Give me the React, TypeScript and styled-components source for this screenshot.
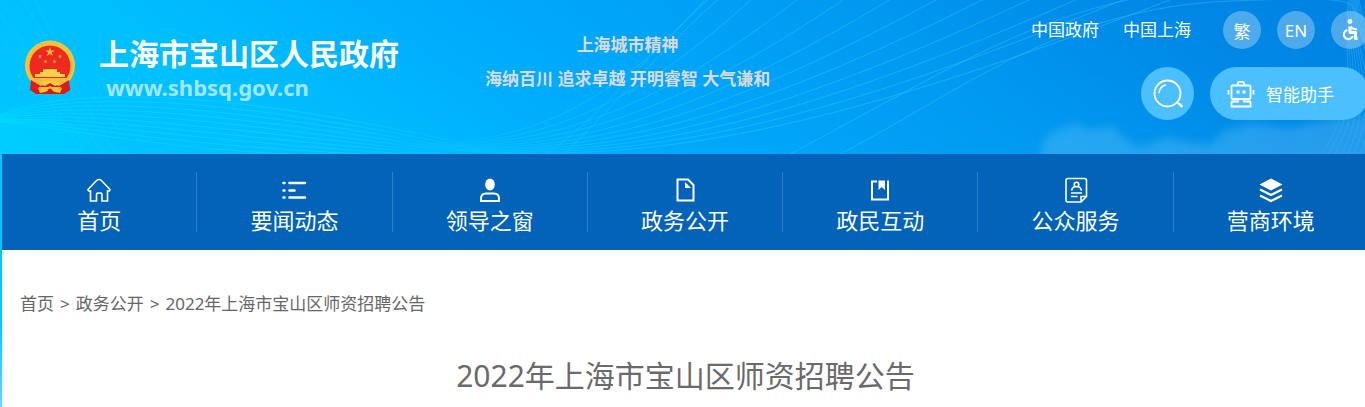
import React from "react";
import styled, { createGlobalStyle } from "styled-components";

const GlobalStyle = createGlobalStyle`
  *, *::before, *::after { box-sizing: border-box; }
  html, body { margin: 0; padding: 0; }
  body {
    font-family: "Noto Sans", "Noto Sans CJK SC", sans-serif;
    color: #666;
    background: #fff;
    overflow-x: hidden;
  }
  a { color: inherit; text-decoration: none; }
`;

const Page = styled.div`
  min-height: 100vh;
  overflow: hidden;
  background: linear-gradient(to bottom, #00c3ff 0, #00c8ff 320px, #62d6ff 407px);
`;

const Wide = styled.div`
  width: calc(100% + 4px);
`;

const Header = styled.header`
  position: relative;
  display: flex;
  align-items: flex-start;
  height: 154px;
  background: linear-gradient(35deg, #00c6ff 0%, #00bfff 20%, #00aafc 42%, #009af1 66%, #0088e6 86%, #0082e2 100%);
`;

const Backdrop = styled.svg`
  position: absolute;
  inset: 0;
  width: 100%;
  height: 100%;
`;

const Brand = styled.a`
  position: relative;
  display: flex;
  gap: 23px;
  padding: 36px 0 0 24px;
  color: #fff;
`;

const Emblem = styled.svg`
  width: 52px;
  height: 54px;
  margin-top: 4px;
`;

const BrandText = styled.div`
  display: flex;
  flex-direction: column;
`;

const SiteName = styled.span`
  font-size: 30px;
  line-height: 36px;
  font-weight: 700;
  white-space: nowrap;
`;

const SiteUrl = styled.span`
  padding-left: 7px;
  font-size: 22px;
  line-height: 30px;
  font-weight: 700;
  color: rgba(255, 255, 255, 0.65);
`;

const Slogan = styled.p`
  position: relative;
  margin: 28px 0 0 86px;
  font-size: 17px;
  line-height: 34px;
  font-weight: 700;
  text-align: center;
  white-space: nowrap;
  color: #d9dadd;
`;

const Tools = styled.div`
  position: relative;
  display: flex;
  flex-direction: column;
  align-items: flex-end;
  gap: 18px;
  margin-left: auto;
  padding-top: 11px;
`;

const ToolRow = styled.div`
  display: flex;
  align-items: center;
  gap: 16px;
`;

const TopLink = styled.a`
  margin-right: 8px;
  font-size: 17px;
  line-height: 38px;
  color: #fff;
  white-space: nowrap;

  &:last-of-type {
    margin-right: 16px;
  }
`;

const RoundButton = styled.button<{ $size: number; $solid?: boolean }>`
  display: flex;
  align-items: center;
  justify-content: center;
  flex: none;
  width: ${(p) => p.$size}px;
  height: ${(p) => p.$size}px;
  padding: 0;
  border: 0;
  border-radius: 50%;
  background: ${(p) => (p.$solid ? "#4cbfff" : "rgba(255, 255, 255, 0.3)")};
  color: #fff;
  font-family: inherit;
  font-size: 17px;
  cursor: pointer;
`;

const AssistantButton = styled.button`
  display: flex;
  align-items: center;
  gap: 11px;
  height: 53px;
  padding: 0 35px 0 17px;
  border: 0;
  border-radius: 27px;
  background: #4cbfff;
  color: #fff;
  font-family: inherit;
  font-size: 17px;
  white-space: nowrap;
  cursor: pointer;
`;

const Nav = styled.nav`
  display: flex;
  margin-left: 2px;
  padding: 18px 0;
  background: #0263b9;
`;

const NavItem = styled.a`
  flex: 1;
  display: flex;
  flex-direction: column;
  align-items: center;
  height: 60px;
  padding-top: 4px;
  border-right: 1px solid #2f7fc6;
  color: #fff;
  font-size: 22px;
  line-height: 32px;

  &:last-child {
    border-right-color: transparent;
  }
`;

const NavIcon = styled.svg`
  flex: none;
  width: 28px;
  height: 28px;
  fill: none;
  stroke: #fff;
  stroke-width: 2;
`;

const Main = styled.main`
  margin-left: 2px;
  min-height: calc(100vh - 250px);
  padding: 41px 0 10px 18px;
  background: #fff;
`;

const Crumbs = styled.div`
  display: flex;
  gap: 6px;
  font-size: 17px;
  line-height: 26px;
  color: #666;
`;

const Title = styled.h1`
  margin: 37px 18px 0 0;
  font-size: 30px;
  line-height: 44px;
  font-weight: 400;
  text-align: center;
  color: #6a6a6a;
`;

const steps = (n: number) => Array.from({ length: n }, (_, i) => i / (n - 1));

function HeaderBackdrop() {
  return (
    <Backdrop viewBox="0 0 1369 154" preserveAspectRatio="xMaxYMin slice" aria-hidden="true">
      <defs>
        <filter id="mist" x="-20%" y="-50%" width="140%" height="200%">
          <feGaussianBlur stdDeviation="5" />
        </filter>
        <linearGradient id="leftGlow" gradientUnits="userSpaceOnUse" x1="0" y1="0" x2="560" y2="0">
          <stop offset="0" stopColor="#00e0ff" stopOpacity="0.55" />
          <stop offset="0.6" stopColor="#30d4ff" stopOpacity="0.4" />
          <stop offset="1" stopColor="#10d0ff" stopOpacity="0" />
        </linearGradient>
        <linearGradient id="rightGlow" gradientUnits="userSpaceOnUse" x1="400" y1="0" x2="1369" y2="0">
          <stop offset="0" stopColor="#10d0ff" stopOpacity="0" />
          <stop offset="0.12" stopColor="#10d0ff" stopOpacity="0.4" />
          <stop offset="0.3" stopColor="#2cc8ff" stopOpacity="0.5" />
          <stop offset="1" stopColor="#45c0f8" stopOpacity="0.4" />
        </linearGradient>
        <linearGradient id="shore" x1="0" y1="0" x2="1" y2="0">
          <stop offset="0" stopColor="#00dcff" stopOpacity="0.35" />
          <stop offset="1" stopColor="#00dcff" stopOpacity="0.1" />
        </linearGradient>
      </defs>
      <path d="M0 120C60 116 90 124 132 156H0Z" fill="url(#shore)" />
      <g fill="#6cc5f5" opacity="0.34" filter="url(#mist)">
        <path d="M1042 166V140L1058 130L1074 124L1092 130L1112 126L1124 138L1140 148L1166 137L1190 143L1212 144L1222 132L1250 124L1290 128L1330 120L1376 114V166Z" />
      </g>
      <g fill="none" stroke="url(#rightGlow)" strokeWidth="1">
        {steps(11).map((t) => (
          <path
            key={t}
            d={`M400 ${143 + 3 * t}C${520 + 100 * t} ${147 + 20 * t} ${610 + 180 * t} ${112 + 38 * t} ${715 + 485 * t} -12`}
          />
        ))}
        <path d="M540 158C600 120 640 60 712 -4M560 158C620 100 660 50 722 -4" />
        <path d="M840 154C960 92 1060 8 1230 1S1330 8 1369 20" />
        <path d="M790 154C950 70 1050 0 1200 -10" />
      </g>
      <g fill="none" stroke="url(#leftGlow)" strokeWidth="1">
        {steps(10).map((t) => (
          <path
            key={t}
            d={`M-10 ${119 + 2 * t}C${60 + 30 * t} ${85 + 45 * t} ${220 - 40 * t} ${88 + 68 * t} ${460 - 60 * t} ${143 + 14 * t}S640 150 720 170`}
          />
        ))}
      </g>
      <g fill="none" stroke="#2ccfff" strokeWidth="1" opacity="0.35">
        <path d="M20 -4L116 154M-4 8L104 154M-4 30C40 80 60 120 84 154M34 -4C60 60 110 120 140 154" />
      </g>
      <g fill="none" stroke="#2cb6f6" strokeWidth="1" opacity="0.5">
        {steps(7).map((t) => (
          <path
            key={t}
            d={`M${1349 + 10 * t} -4C${1340 + 6 * t} ${60 - 10 * t} ${1365 + 24 * t} 90 ${1318 + 40 * t} 160`}
          />
        ))}
        {steps(5).map((t) => (
          <path key={t} d={`M${1352 + 6 * t} -4C${1360 + 10 * t} 50 ${1380 - 8 * t} 70 ${1366 + 6 * t} 110`} />
        ))}
      </g>
    </Backdrop>
  );
}

const star = (cx: number, cy: number, r: number) =>
  Array.from({ length: 10 }, (_, i) => {
    const rad = i % 2 ? r * 0.4 : r;
    const a = (Math.PI / 5) * i - Math.PI / 2;
    return `${cx + rad * Math.cos(a)},${cy + rad * Math.sin(a)}`;
  }).join(" ");

function NationalEmblem() {
  return (
    <Emblem viewBox="0 0 52 54" role="img" aria-label="国徽">
      <path d="M8 38H44L46 50L40 54H12L8 51Z" fill="#d8191b" />
      <circle cx="26" cy="25.500" r="25" fill="#f6c33a" />
      <circle cx="26" cy="25.500" r="22.500" fill="none" stroke="#efb632" strokeWidth="1" strokeDasharray="2 2" />
      <circle cx="26" cy="26" r="20.500" fill="#ee2a20" />
      <polygon points={star(26, 12, 5)} fill="#f4b53a" />
      {[[16, 16.5], [36, 16.5], [21.5, 21.5], [30.5, 21.5]].map(([x, y]) => (
        <polygon key={`${x}-${y}`} points={star(x, y, 2.3)} fill="#e8a036" />
      ))}
      <path d="M19 29H33V32H36V34H41V37H11V34H16V32H19Z" fill="#f9d04a" />
      <path d="M9 38H43L40 42L32 46L26 42L20 46L12 42Z" fill="#f3bd36" />
      <path d="M7 40L17 46L26 40L35 46L45 40L46 50L40 53L37 47H15L12 53L6 50Z" fill="#dc1c1c" />
      <path d="M18 42L26 40L34 42L37 44L31 46L26 43L21 46L15 44Z" fill="#f9cb45" />
      <path d="M14 48L20 49L26 46L32 49L38 48L36 53L31 52L26 50L21 52L16 53Z" fill="#f6c33a" />
      <circle cx="26" cy="51" r="2.500" fill="#d8191b" />
    </Emblem>
  );
}

const icons: Record<string, React.ReactNode> = {
  home: (
    <path
      d="M3 13.500L11.500 4.500Q14 2.500 16.500 4.500L25 13.500Q25 15.500 22.500 15V25H17V18.500Q17 17 15.500 17H13Q11.500 17 11.500 18.500V25H5.500V15Q3 15.500 3 13.500Z"
      strokeWidth="1.600"
    />
  ),
  list: (
    <g strokeWidth="2.500" strokeLinecap="round">
      <path d="M3.500 7H4.500M3.500 14.500H4.500M3.500 21.500H4.500M9.500 7H25M9.500 14.500H14.500M9.500 21.500H25" />
    </g>
  ),
  person: (
    <>
      <ellipse cx="14" cy="8.500" rx="4.800" ry="6" fill="#fff" stroke="none" />
      <path d="M5 25V22.500Q5 17.500 10 17.500H18Q23 17.500 23 22.500V25Z" />
    </>
  ),
  file: (
    <>
      <path d="M6.500 3.500H17L22.500 9V24.500H6.500Z" />
      <path d="M14 6L20 12H14Z" fill="#fff" stroke="none" />
    </>
  ),
  bookmark: (
    <>
      <path d="M11 5.500H6V23.500H22V4.500" />
      <path d="M12.500 4.500H19V14L15.700 11L12.500 14Z" fill="#fff" stroke="none" />
    </>
  ),
  profile: (
    <g strokeWidth="1.600">
      <path d="M19 26H6Q4 26 4 24V4.500Q4 2.500 6 2.500H22.500Q24.500 2.500 24.500 4.500V20.500Z" />
      <path d="M24 20.500H19V26" />
      <circle cx="14.500" cy="8.500" r="2.300" />
      <path d="M9.500 14.500Q10.500 11 13 10.800M19.500 14.500Q18.500 11 16 10.800M9 17H20M9 20.500H15.500" />
    </g>
  ),
  layers: (
    <>
      <path d="M14 2.500L25.500 8.500L14 14.500L2.500 8.500Z" fill="#fff" stroke="none" />
      <path d="M3 13.500L14 19L25 13.500M3 19.500L14 25L25 19.500" strokeWidth="2.200" />
    </>
  ),
};

const navItems = [
  ["home", "首页"],
  ["list", "要闻动态"],
  ["person", "领导之窗"],
  ["file", "政务公开"],
  ["bookmark", "政民互动"],
  ["profile", "公众服务"],
  ["layers", "营商环境"],
];

function WheelchairIcon() {
  return (
    <svg width="24" height="24" viewBox="0 0 24 24" fill="none" stroke="#fff" aria-hidden="true">
      <circle cx="12" cy="3.500" r="2.400" fill="#fff" stroke="none" />
      <path d="M12 8.500V14.500H17.500V20.500H19.500" strokeWidth="3" strokeLinejoin="round" />
      <path d="M12.500 8.500Q14.500 11.500 19 11.300" strokeWidth="2.200" />
      <path d="M9.500 12A4.600 4.600 0 1 0 14.800 18" strokeWidth="2.200" />
    </svg>
  );
}

function SearchIcon() {
  return (
    <svg width="32" height="32" viewBox="0 0 32 32" fill="none" stroke="#fff" strokeLinecap="round" aria-hidden="true">
      <circle cx="15.500" cy="15.500" r="13" strokeWidth="1.800" />
      <path d="M7 14.500Q8 8.500 13.500 7" strokeWidth="1.600" />
      <path d="M25.500 24.500L26.500 25.500" strokeWidth="1.600" />
      <path d="M27.500 26L29.500 28" strokeWidth="2.600" />
    </svg>
  );
}

function RobotIcon() {
  return (
    <svg width="28" height="28" viewBox="0 0 28 28" fill="none" stroke="#fff" strokeWidth="1.800" aria-hidden="true">
      <rect x="4.500" y="5.500" width="19" height="13.500" rx="1" />
      <path d="M11 5V2.800Q11 1.800 12 1.800H16Q17 1.800 17 2.800V5M1.500 10V14.500M26.500 10V14.500" />
      <path d="M11 19V21.500H5.500Q4.500 21.500 4.500 22.500V26.500H23.500V22.500Q23.500 21.500 22.500 21.500H17V19" />
      <path d="M11 10.500V13.500M17 10.500V13.500" strokeWidth="3" />
    </svg>
  );
}

export default function App() {
  return (
    <Page>
      <GlobalStyle />
      <Wide>
        <Header>
          <HeaderBackdrop />
          <Brand href="#">
            <NationalEmblem />
            <BrandText>
              <SiteName>上海市宝山区人民政府</SiteName>
              <SiteUrl>www.shbsq.gov.cn</SiteUrl>
            </BrandText>
          </Brand>
          <Slogan>
            上海城市精神
            <br />
            海纳百川 追求卓越 开明睿智 大气谦和
          </Slogan>
          <Tools>
            <ToolRow>
              <TopLink href="#">中国政府</TopLink>
              <TopLink href="#">中国上海</TopLink>
              <RoundButton $size={38} type="button">繁</RoundButton>
              <RoundButton $size={38} type="button">EN</RoundButton>
              <RoundButton $size={38} type="button" aria-label="无障碍">
                <WheelchairIcon />
              </RoundButton>
            </ToolRow>
            <ToolRow>
              <RoundButton $size={53} $solid type="button" aria-label="搜索">
                <SearchIcon />
              </RoundButton>
              <AssistantButton type="button">
                <RobotIcon />
                智能助手
              </AssistantButton>
            </ToolRow>
          </Tools>
        </Header>
        <Nav>
          {navItems.map(([icon, label]) => (
            <NavItem href="#" key={icon}>
              <NavIcon viewBox="0 0 28 28" aria-hidden="true">{icons[icon]}</NavIcon>
              {label}
            </NavItem>
          ))}
        </Nav>
        <Main>
          <Crumbs>
            <a href="#">首页</a>
            <span>&gt;</span>
            <a href="#">政务公开</a>
            <span>&gt;</span>
            <span>2022年上海市宝山区师资招聘公告</span>
          </Crumbs>
          <Title>2022年上海市宝山区师资招聘公告</Title>
        </Main>
      </Wide>
    </Page>
  );
}
